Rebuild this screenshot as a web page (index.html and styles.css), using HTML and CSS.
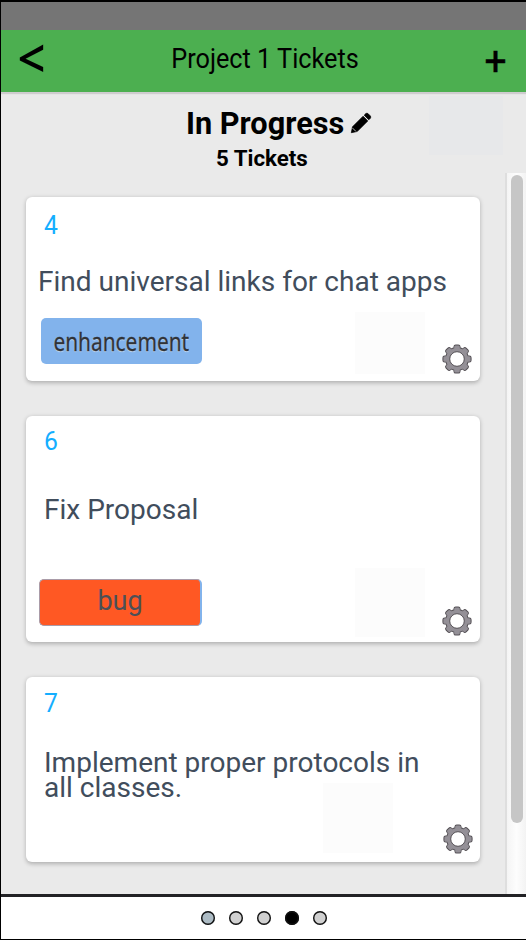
FILE: index.html
```
<!DOCTYPE html>
<html lang="en">
<head>
<meta charset="utf-8">
<title>Project 1 Tickets</title>
<link rel="stylesheet" href="styles.css">
</head>
<body>
<svg width="0" height="0" class="defs">
  <defs>
    <g id="teeth">
      <circle r="11.3"/>
      <rect id="tooth" x="-2.9" y="-14" width="5.8" height="28" rx="1.6"/>
      <use href="#tooth" transform="rotate(45)"/>
      <use href="#tooth" transform="rotate(90)"/>
      <use href="#tooth" transform="rotate(135)"/>
    </g>
    <symbol id="gear" viewBox="-15 -15 30 30">
      <use href="#teeth" fill="#555156" stroke="#555156" stroke-width="1.2"/>
      <use href="#teeth" fill="#949097" transform="scale(.97)"/>
      <circle r="7.3" fill="#fff" stroke="#555156" stroke-width="1"/>
    </symbol>
  </defs>
</svg>
<div class="app">
  <div class="status"></div>
  <header class="bar">
    <span class="back">&lt;</span>
    <h1 class="title">Project 1 Tickets</h1>
    <span class="add">+</span>
  </header>
  <main class="main">
    <section class="board">
      <div class="heading">
        <h2 class="name">In Progress</h2>
        <svg class="pencil" viewBox="0 0 20 20"><path stroke="#000" stroke-width=".7" stroke-linejoin="round" d="M.3 19.7 1.5 13.8 12.1 3.2 16.8 7.9 6.2 18.5Z M13.2 2.2 14.8.6Q16 -.2 17 .6L19.4 3Q20.2 4 19.4 5.2L17.8 6.8Z"/><path d="M1.6 15.1 4.9 18.4" stroke="#eaeaea" stroke-width=".8"/></svg>
      </div>
      <p class="count">5 Tickets</p>
      <article class="card card-a">
        <div class="num">4</div>
        <div class="text">Find universal links for chat apps</div>
        <span class="tag enhancement"><span class="label">enhancement</span></span>
        <svg class="gear"><use href="#gear"/></svg>
      </article>
      <article class="card card-b">
        <div class="num">6</div>
        <div class="text">Fix Proposal</div>
        <span class="tag bug">bug</span>
        <svg class="gear"><use href="#gear"/></svg>
      </article>
      <article class="card card-c">
        <div class="num">7</div>
        <div class="text">Implement proper protocols in<br>all classes.</div>
        <svg class="gear"><use href="#gear"/></svg>
      </article>
    </section>
    <div class="track"><div class="thumb"></div></div>
  </main>
  <footer class="pager">
    <i class="dot first"></i><i class="dot"></i><i class="dot"></i><i class="dot active"></i><i class="dot"></i>
  </footer>
</div>
</body>
</html>
```
FILE: styles.css
```
* { box-sizing: border-box; }
body { margin: 0; font-family: Roboto, sans-serif; color: #000; }
h1, h2, p { margin: 0; }
.defs { position: absolute; }
.app {
  width: 526px; height: 940px; overflow: hidden;
  display: flex; flex-direction: column;
  border: solid #000; border-width: 2px 0 1px 1px;
  background: #eaeaea;
}
.status { height: 28px; background: #757575; flex: none; }
.bar {
  height: 62px; flex: none; background: #4caf50;
  display: grid; grid-template-columns: 60px 1fr 60px;
  box-shadow: 0 2px 1px #cfcccf;
}
.back { font: 600 49px/62px "Open Sans", sans-serif; padding-left: 16.5px; height: 62px; margin-top: -4px; transform: scaleY(1.1); transform-origin: 0 32px; }
.title { font-weight: 400; font-size: 26px; line-height: 59px; text-align: center; white-space: nowrap; transform: translateX(1.5px) scale(.972, 1.03); }
.add { font-weight: 400; font-size: 39px; line-height: 62px; text-align: center; -webkit-text-stroke: .4px #000; transform: translateX(-.5px) scaleY(1.06); }
.main { flex: 1; display: flex; min-height: 0; }
.board {
  width: 504px; flex: none;
  background: linear-gradient(#e7e8ea, #e7e8ea) 428px 4px / 74px 59px no-repeat;
}
.heading { display: flex; padding: 14px 0 0 185px; height: 50px; align-items: flex-start; }
.name { font-weight: 700; font-size: 31px; line-height: 36px; white-space: nowrap; width: 159px; transform: scaleX(.99); transform-origin: 0 0; }
.pencil { width: 20px; height: 20px; margin: 7px 0 0 6px; overflow: visible; }
.count { font-weight: 700; font-size: 22.3px; line-height: 26px; padding: 3px 0 0 215px; margin-bottom: 26px; height: 29px; }
.card {
  margin-left: 24.5px; width: 454.5px; border-radius: 6px; position: relative;
  background: #fff; box-shadow: 0 1.5px 4px rgba(0,0,0,.25);
  display: flex; flex-direction: column; align-items: flex-start;
}
.card-a { height: 184px; background: linear-gradient(#fcfcfc, #fcfcfc) 329px 115px / 70px 62px no-repeat #fff; }
.card-b { height: 226px; margin-top: 35px; background: linear-gradient(#fcfcfc, #fcfcfc) 329px 152px / 70px 69px no-repeat #fff; }
.card-c { height: 184.5px; margin-top: 35px; background: linear-gradient(#fcfcfc, #fcfcfc) 297px 106px / 70px 70px no-repeat #fff; }
.num { font-size: 26px; line-height: 30px; color: #14aeff; margin: 13px 0 0 18px; transform: scaleX(.95); transform-origin: 0 0; }
.card-b .num { margin-top: 10px; }
.card-c .num { margin-top: 11px; }
.text { font-size: 28.5px; line-height: 34px; color: #414d5c; white-space: nowrap; margin: 25px 0 0 12px; transform: scaleX(.983); transform-origin: 0 0; }
.card-b .text { margin: 37px 0 0 18px; }
.card-c .text { margin: 32px 0 0 18px; line-height: 25px; }
.tag { text-align: center; border-radius: 5px; height: 46px; width: 161px; margin-left: 15px; }
.enhancement {
  margin-top: 19px; background: #82b3ec; color: #303338;
  font: 25px/47px "Noto Sans", sans-serif; text-shadow: 0 1px 1px #c5dcf5;
}
.label { display: inline-block; margin: 0 -10px; transform: scaleX(.835); -webkit-text-stroke: .3px #303338; }
.bug {
  margin: 52px 0 0 13.5px; background: #ff5823; color: #4c5057;
  font-size: 27px; line-height: 42px; border: 1px solid #a99ba8; border-right: 2px solid #82b3ec; width: 163px; height: 47px;
}
.gear { position: absolute; width: 30px; height: 30px; right: 8.5px; bottom: 7px; }
.card-b .gear { bottom: 6px; }
.card-c .gear { right: 7.5px; bottom: 8px; }
.track {
  flex: 1; margin-top: 81px; border-left: 2px solid #dedede; padding: 2px 0 0 4px;
  background: linear-gradient(90deg, #f4f4f4, #fdfdfd 50%, #f3f3f3);
}
.thumb { width: 11.5px; height: 648px; border-radius: 6px; background: #c6c6c6; }
.pager {
  flex: none; height: 45px; background: #fff; border-top: 3px solid #222225;
  display: flex; gap: 14px; padding: 14px 0 0 199.5px;
}
.dot { width: 14px; height: 14px; border-radius: 50%; box-shadow: inset 0 0 0 1.4px #111; background: #d0d0d0; }
.first { background: #acbbc4; }
.active { background: #000; }
```
